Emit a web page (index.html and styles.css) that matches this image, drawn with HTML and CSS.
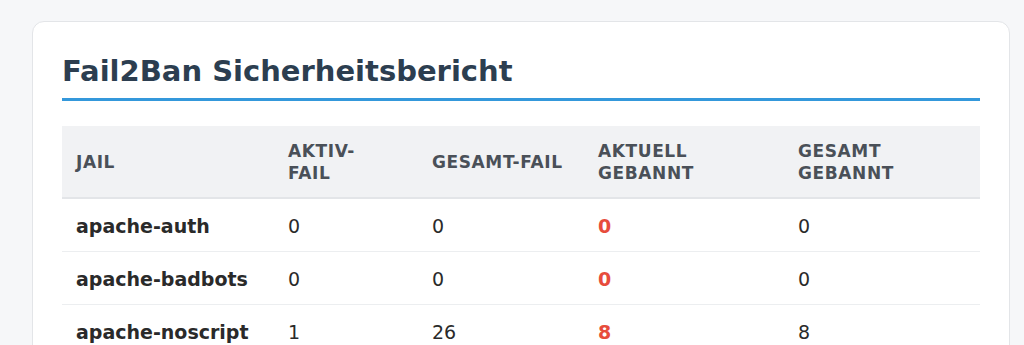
FILE: index.html
```html
<!DOCTYPE html>
<html lang="de">
<head>
    <meta charset="UTF-8">
    <meta name="viewport" content="width=device-width, initial-scale=1.0">
    <title>Fail2Ban Sicherheitsbericht</title>
    <link rel="stylesheet" href="styles.css">
</head>
<body>

<div class="report">
    <h1>Fail2Ban Sicherheitsbericht</h1>

    <!-- Jail overview -->
    <table class="jails">
        <thead>
            <tr>
                <th class="col-jail">Jail</th>
                <th class="col-active">Aktiv-<br>Fail</th>
                <th class="col-total">Gesamt-Fail</th>
                <th class="col-banned">Aktuell<br>gebannt</th>
                <th class="col-banned-total">Gesamt<br>gebannt</th>
            </tr>
        </thead>
        <tbody>
            <tr>
                <td class="jail">apache-auth</td>
                <td>0</td>
                <td>0</td>
                <td class="banned">0</td>
                <td>0</td>
            </tr>
            <tr>
                <td class="jail">apache-badbots</td>
                <td>0</td>
                <td>0</td>
                <td class="banned">0</td>
                <td>0</td>
            </tr>
            <tr>
                <td class="jail">apache-noscript</td>
                <td>1</td>
                <td>26</td>
                <td class="banned">8</td>
                <td>8</td>
            </tr>
        </tbody>
    </table>
</div>

</body>
</html>
```

FILE: styles.css
```css
/* Report page */
body {
    font-family: "DejaVu Sans", Verdana, sans-serif;
    margin: 0;
    padding: 21px 14px 40px 32px;
    background-color: #f6f7f9;
    color: #2a2a2a;
}
.report {
    background: #ffffff;
    border: 1px solid #e3e5e8;
    border-radius: 12px;
    padding: 29px 29px 30px 29px;
}
.report h1 {
    margin: 0 0 25px 0;
    padding: 0 0 7px 0;
    font-size: 29px;
    line-height: 40px;
    color: #2c3e50;
    border-bottom: 3px solid #3498db;
}
.jails {
    width: 100%;
    border-collapse: collapse;
    table-layout: fixed;
}
/* column widths without the 14px side padding */
.col-jail { width: 184px; }
.col-active { width: 116px; }
.col-total { width: 138px; }
.col-banned { width: 172px; }
.jails th {
    background: #f1f2f4;
    color: #4a5058;
    text-transform: uppercase;
    text-align: left;
    font-size: 17px;
    letter-spacing: 0.6px;
    line-height: 22px;
    padding: 14px 14px 13px 14px;
    border-bottom: 2px solid #e3e5e8;
    vertical-align: middle;
}
.jails td {
    font-size: 19px;
    line-height: 24px;
    padding: 15px 14px 13px 14px;
    border-bottom: 1px solid #eceef0;
    white-space: nowrap;
}
.jails td.jail {
    font-weight: bold;
}
.jails td.banned {
    color: #e74c3c;
    font-weight: bold;
}
```
